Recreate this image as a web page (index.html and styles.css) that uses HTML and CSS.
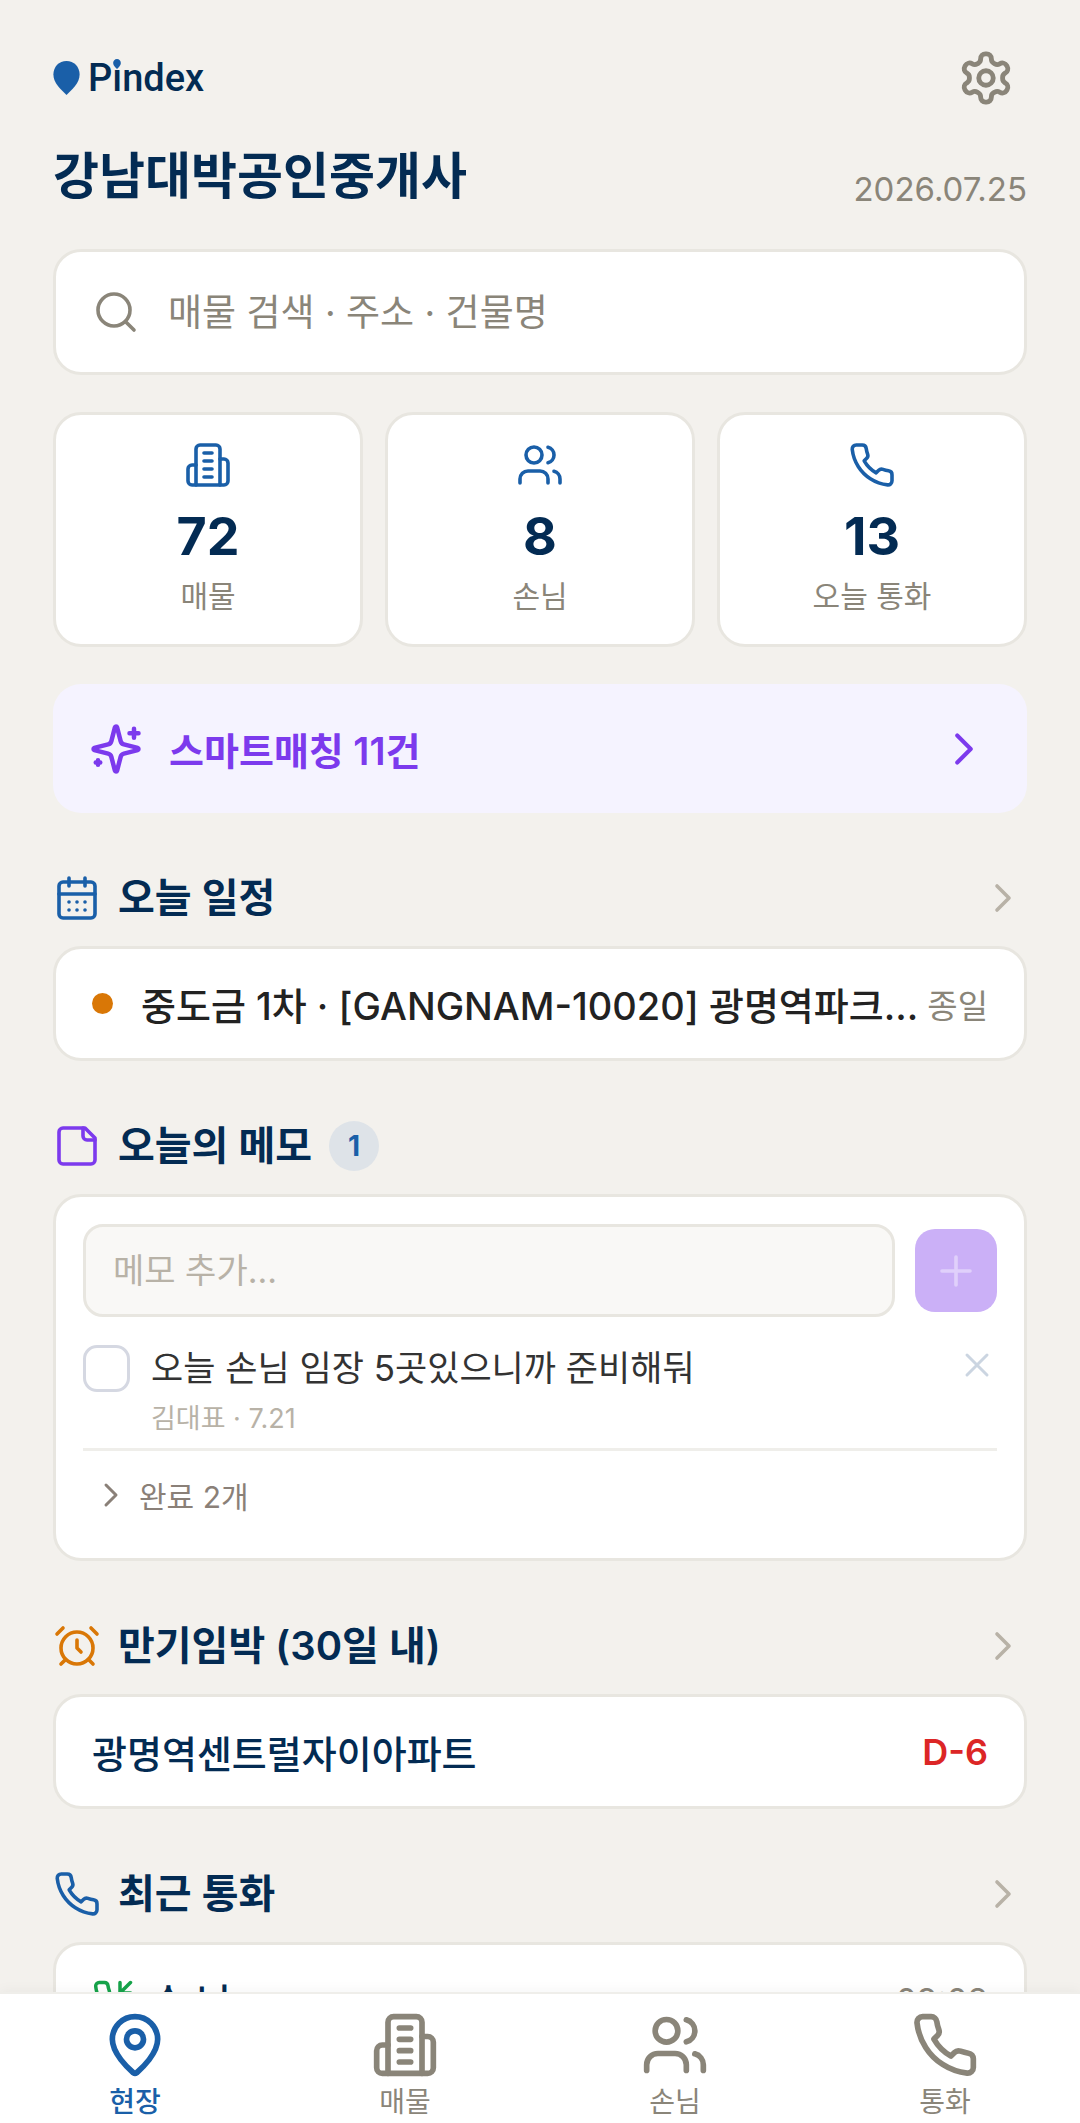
FILE: index.html
```html
<!DOCTYPE html>
<html lang="ko">
<head>
  <meta charset="UTF-8">
  <meta name="viewport" content="width=device-width, initial-scale=1.0">
  <title>Pindex</title>
  <link rel="stylesheet" href="styles.css">
</head>
<body>

  <!-- icons used more than once -->
  <svg class="sprite" aria-hidden="true">
    <symbol id="i-building" viewBox="0 0 24 24">
      <path d="M6 22V4a2 2 0 0 1 2-2h8a2 2 0 0 1 2 2v18Z"/>
      <path d="M6 12H4a2 2 0 0 0-2 2v6a2 2 0 0 0 2 2h2"/>
      <path d="M18 9h2a2 2 0 0 1 2 2v9a2 2 0 0 1-2 2h-2"/>
      <path d="M10 6h4M10 10h4M10 14h4M10 18h4"/>
    </symbol>
    <symbol id="i-users" viewBox="0 0 24 24">
      <path d="M16 21v-2a4 4 0 0 0-4-4H6a4 4 0 0 0-4 4v2"/>
      <circle cx="9" cy="7" r="4"/>
      <path d="M22 21v-2a4 4 0 0 0-3-3.87"/>
      <path d="M16 3.13a4 4 0 0 1 0 7.75"/>
    </symbol>
    <symbol id="i-phone" viewBox="0 0 24 24">
      <path d="M22 16.92v3a2 2 0 0 1-2.18 2 19.79 19.79 0 0 1-8.63-3.07 19.5 19.5 0 0 1-6-6 19.79 19.79 0 0 1-3.07-8.67A2 2 0 0 1 4.11 2h3a2 2 0 0 1 2 1.72 12.84 12.84 0 0 0 .7 2.81 2 2 0 0 1-.45 2.11L8.09 9.91a16 16 0 0 0 6 6l1.27-1.27a2 2 0 0 1 2.11-.45 12.84 12.84 0 0 0 2.81.7A2 2 0 0 1 22 16.92z"/>
    </symbol>
    <symbol id="i-chevron" viewBox="0 0 24 24">
      <path d="m9 18 6-6-6-6"/>
    </symbol>
  </svg>

  <main class="content">
    <header class="topbar">
      <a class="logo" href="#" aria-label="Pindex">
        <svg class="logo-pin" viewBox="0 0 27 35"><path d="M13.500 0C5.800 0 0 5.900 0 14c0 8.500 7.500 15.500 13.500 21C19.500 29.500 27 22.500 27 14 27 5.900 21.200 0 13.500 0z"/></svg>
        <span class="logo-text">P<span class="logo-i">ı<svg viewBox="0 0 27 35"><path d="M13.500 0C5.800 0 0 5.900 0 14c0 8.500 7.500 15.500 13.500 21C19.500 29.500 27 22.500 27 14 27 5.900 21.200 0 13.500 0z"/></svg></span>ndex</span>
      </a>
      <button class="settings-btn" type="button" aria-label="설정">
        <svg class="icon icon-58" viewBox="0 0 24 24">
          <path d="M12.22 2h-.44a2 2 0 0 0-2 2v.18a2 2 0 0 1-1 1.73l-.43.25a2 2 0 0 1-2 0l-.15-.08a2 2 0 0 0-2.73.73l-.22.38a2 2 0 0 0 .73 2.73l.15.1a2 2 0 0 1 1 1.72v.51a2 2 0 0 1-1 1.74l-.15.09a2 2 0 0 0-.73 2.73l.22.38a2 2 0 0 0 2.73.73l.15-.08a2 2 0 0 1 2 0l.43.25a2 2 0 0 1 1 1.73V20a2 2 0 0 0 2 2h.44a2 2 0 0 0 2-2v-.18a2 2 0 0 1 1-1.73l.43-.25a2 2 0 0 1 2 0l.15.08a2 2 0 0 0 2.73-.73l.22-.39a2 2 0 0 0-.73-2.73l-.15-.08a2 2 0 0 1-1-1.74v-.5a2 2 0 0 1 1-1.74l.15-.09a2 2 0 0 0 .73-2.73l-.22-.38a2 2 0 0 0-2.73-.73l-.15.08a2 2 0 0 1-2 0l-.43-.25a2 2 0 0 1-1-1.73V4a2 2 0 0 0-2-2z"/>
          <circle cx="12" cy="12" r="3"/>
        </svg>
      </button>
    </header>

    <div class="office">
      <h1>강남대박공인중개사</h1>
      <time class="date" datetime="2026-07-25">2026.07.25</time>
    </div>

    <label class="card search">
      <svg class="icon icon-48" viewBox="0 0 24 24"><circle cx="11" cy="11" r="8"/><path d="m21 21-4.300-4.300"/></svg>
      <input type="search" placeholder="매물 검색 · 주소 · 건물명" aria-label="매물 검색">
    </label>

    <div class="stats">
      <a class="card stat" href="#">
        <svg class="icon icon-48 blue"><use href="#i-building"/></svg>
        <strong>72</strong>
        <span>매물</span>
      </a>
      <a class="card stat" href="#">
        <svg class="icon icon-48 blue"><use href="#i-users"/></svg>
        <strong>8</strong>
        <span>손님</span>
      </a>
      <a class="card stat" href="#">
        <svg class="icon icon-48 blue"><use href="#i-phone"/></svg>
        <strong>13</strong>
        <span>오늘 통화</span>
      </a>
    </div>

    <a class="smart" href="#">
      <svg class="icon icon-54 bold" viewBox="0 0 24 24">
        <path d="M9.937 15.5A2 2 0 0 0 8.5 14.063l-6.135-1.582a.5.5 0 0 1 0-.962L8.5 9.936A2 2 0 0 0 9.937 8.5l1.582-6.135a.5.5 0 0 1 .963 0L14.063 8.5A2 2 0 0 0 15.5 9.937l6.135 1.581a.5.5 0 0 1 0 .964L15.5 14.063a2 2 0 0 0-1.437 1.437l-1.582 6.135a.5.5 0 0 1-.963 0z"/>
        <path d="M20 3v4M22 5h-4M4 17v2M5 18H3"/>
      </svg>
      <span>스마트매칭 11건</span>
      <svg class="icon icon-54"><use href="#i-chevron"/></svg>
    </a>

    <section class="section">
      <a class="section-head" href="#">
        <svg class="icon icon-48 blue" viewBox="0 0 24 24">
          <path d="M8 2v4M16 2v4M3 10h18"/>
          <rect x="3" y="4" width="18" height="18" rx="2"/>
          <path d="M8 14h.01M12 14h.01M16 14h.01M8 18h.01M12 18h.01M16 18h.01"/>
        </svg>
        <h2>오늘 일정</h2>
        <svg class="icon icon-48 more"><use href="#i-chevron"/></svg>
      </a>
      <div class="card row">
        <span class="dot"></span>
        <span class="event">중도금 1차 · [GANGNAM-10020] 광명역파크...</span>
        <span class="when">종일</span>
      </div>
    </section>

    <section class="section">
      <div class="section-head">
        <svg class="icon icon-48 purple" viewBox="0 0 24 24">
          <path d="M16 3H5a2 2 0 0 0-2 2v14a2 2 0 0 0 2 2h14a2 2 0 0 0 2-2V8Z"/>
          <path d="M15 3v4a2 2 0 0 0 2 2h4"/>
        </svg>
        <h2>오늘의 메모</h2>
        <span class="badge">1</span>
      </div>
      <div class="card memo-card">
        <form class="memo-form">
          <input type="text" placeholder="메모 추가..." aria-label="메모 추가">
          <button type="button" aria-label="추가" disabled>
            <svg class="icon" viewBox="0 0 24 24"><path d="M5 12h14M12 5v14"/></svg>
          </button>
        </form>
        <div class="memo-item">
          <input type="checkbox" id="memo1">
          <div class="memo-body">
            <label for="memo1">오늘 손님 임장 5곳있으니까 준비해둬</label>
            <small>김대표 · 7.21</small>
          </div>
          <button class="memo-delete" type="button" aria-label="삭제">
            <svg class="icon icon-40" viewBox="0 0 24 24"><path d="M18 6 6 18M6 6l12 12"/></svg>
          </button>
        </div>
        <button class="memo-done" type="button">
          <svg class="icon icon-40"><use href="#i-chevron"/></svg>
          완료 2개
        </button>
      </div>
    </section>

    <section class="section">
      <a class="section-head" href="#">
        <svg class="icon icon-48 orange" viewBox="0 0 24 24">
          <circle cx="12" cy="13" r="8"/>
          <path d="M12 9v4l2 2M5 3 2 6M22 6l-3-3M6.380 18.700 4 21M17.640 18.670 20 21"/>
        </svg>
        <h2>만기임박 (30일 내)</h2>
        <svg class="icon icon-48 more"><use href="#i-chevron"/></svg>
      </a>
      <a class="card row" href="#">
        <span class="name">광명역센트럴자이아파트</span>
        <span class="dday">D-6</span>
      </a>
    </section>

    <section class="section">
      <a class="section-head" href="#">
        <svg class="icon icon-48 blue"><use href="#i-phone"/></svg>
        <h2>최근 통화</h2>
        <svg class="icon icon-48 more"><use href="#i-chevron"/></svg>
      </a>
      <a class="card row call" href="#">
        <svg class="icon icon-42 green bold" viewBox="0 0 24 24">
          <path d="M16 2v6h6M22 2l-6 6"/>
          <use href="#i-phone" width="24" height="24"/>
        </svg>
        <span class="name">손 님</span>
        <span class="when">09:08</span>
      </a>
    </section>
  </main>

  <nav class="tabbar">
    <a class="active" href="#">
      <svg class="icon icon-68" viewBox="0 0 24 24">
        <path d="M20 10c0 4.993-5.539 10.193-7.399 11.799a1 1 0 0 1-1.202 0C9.539 20.193 4 14.993 4 10a8 8 0 0 1 16 0"/>
        <circle cx="12" cy="10" r="3"/>
      </svg>
      현장
    </a>
    <a href="#">
      <svg class="icon icon-68"><use href="#i-building"/></svg>
      매물
    </a>
    <a href="#">
      <svg class="icon icon-68"><use href="#i-users"/></svg>
      손님
    </a>
    <a href="#">
      <svg class="icon icon-68"><use href="#i-phone"/></svg>
      통화
    </a>
  </nav>

</body>
</html>
```
FILE: styles.css
```css
* {
  box-sizing: border-box;
}
body {
  margin: 0;
  height: 100vh;
  display: flex;
  flex-direction: column;
  background: #f3f1ed;
  color: #032b53;
  font-family: Inter, "Noto Sans CJK KR", sans-serif;
  font-size: 38px;
}
a {
  color: inherit;
  text-decoration: none;
}
button, input {
  font: inherit;
  color: inherit;
}
button {
  border: none;
  background: none;
  padding: 0;
  cursor: pointer;
}
h1, h2 {
  margin: 0;
}
input::placeholder {
  opacity: 1;
}

/* icons */
.sprite {
  display: none;
}
.icon {
  flex: none;
  fill: none;
  stroke: currentColor;
  stroke-width: 1.8;
  stroke-linecap: round;
  stroke-linejoin: round;
}
.icon.bold {
  stroke-width: 2;
}
.icon-40 { width: 40px; height: 40px; }
.icon-42 { width: 42px; height: 42px; }
.icon-48 { width: 48px; height: 48px; }
.icon-54 { width: 54px; height: 54px; }
.icon-58 { width: 58px; height: 58px; stroke-width: 2; }
.icon-68 { width: 68px; height: 68px; stroke-width: 2; }
.blue { color: #1a5fa8; }
.purple { color: #7c3aed; }
.orange { color: #d97706; }
.green { color: #16a34a; }

.content {
  flex: 1;
  min-height: 0;
  overflow-y: auto;
  scrollbar-width: none;
  padding: 37px 53px 0;
}
.card {
  background: #fff;
  border: 3px solid #e8e6e0;
  border-radius: 28px;
}

/* header */
.topbar {
  display: flex;
  align-items: center;
  justify-content: space-between;
}
.logo {
  display: flex;
  align-items: center;
  gap: 8px;
}
.logo svg {
  fill: #1a5fa8;
}
.logo-pin {
  width: 27px;
  height: 34px;
}
.logo-text {
  font-family: Roboto, sans-serif;
  font-size: 38px;
  font-weight: 500;
  line-height: 44px;
}
.logo-i {
  position: relative;
}
.logo-i svg {
  position: absolute;
  top: 3px;
  left: 1px;
  width: 8px;
  height: 10px;
}
.settings-btn {
  display: flex;
  padding: 12px;
  color: #8a8579;
}
.office {
  display: flex;
  align-items: flex-end;
  justify-content: space-between;
  margin: 22px 0 38px;
}
.office h1 {
  font-size: 50px;
  font-weight: 700;
  line-height: 70px;
}
.date {
  font-size: 33px;
  line-height: 44px;
  color: #8a8579;
}

.search {
  display: flex;
  align-items: center;
  gap: 28px;
  height: 126px;
  padding: 0 36px;
  color: #8a8579;
}
.search input {
  flex: 1;
  min-width: 0;
  padding: 0;
  border: none;
  outline: none;
  background: none;
  font-size: 37px;
}
.search input::placeholder {
  color: #8a8579;
}

/* counters */
.stats {
  display: grid;
  grid-template-columns: repeat(3, 1fr);
  gap: 22px;
  margin: 37px 0;
}
.stat {
  display: flex;
  flex-direction: column;
  align-items: center;
  padding: 26px 0;
}
.stat strong {
  margin: 16px 0 5px;
  font-size: 52px;
  line-height: 64px;
}
.stat span {
  font-size: 30px;
  line-height: 44px;
  color: #8a8579;
}

.smart {
  display: flex;
  align-items: center;
  gap: 26px;
  height: 129px;
  margin-bottom: 60px;
  padding: 0 36px;
  border-radius: 28px;
  background: #f5f3ff;
  color: #7c3aed;
  font-weight: 600;
}
.smart span {
  flex: 1;
}

/* sections */
.section {
  margin-bottom: 60px;
}
.section-head {
  display: flex;
  align-items: center;
  gap: 17px;
  height: 49px;
  margin-bottom: 24px;
}
.section-head h2 {
  font-size: 40px;
  font-weight: 600;
  line-height: 48px;
}
.more {
  margin-left: auto;
  color: #b8b2a7;
}
.badge {
  width: 50px;
  height: 50px;
  border-radius: 50%;
  background: #dee3e8;
  color: #1a5fa8;
  font-size: 28px;
  font-weight: 700;
  line-height: 50px;
  text-align: center;
}
.row {
  display: flex;
  align-items: center;
  height: 115px;
  padding: 0 36px;
}
.dot {
  flex: none;
  width: 21px;
  height: 21px;
  margin-right: 28px;
  border-radius: 50%;
  background: #d97706;
}
.event {
  flex: 1;
  min-width: 0;
  overflow: hidden;
  text-overflow: ellipsis;
  white-space: nowrap;
  color: #222;
  font-weight: 500;
}
.name {
  flex: 1;
  font-weight: 500;
}
.when {
  margin-left: 6px;
  font-size: 33px;
  color: #8a8579;
}
.dday {
  font-size: 36px;
  font-weight: 600;
  color: #dc2626;
}
.call .icon {
  margin-right: 17px;
}

/* memo */
.memo-card {
  padding: 27px 27px 33px;
  font-size: 34px;
}
.memo-form {
  display: flex;
  align-items: center;
  gap: 20px;
}
.memo-form input {
  flex: 1;
  min-width: 0;
  height: 93px;
  padding: 0 27px;
  border: 3px solid #e8e6e0;
  border-radius: 20px;
  background: #f9f8f6;
}
.memo-form input::placeholder {
  color: #b8b2a7;
}
.memo-form button {
  display: flex;
  align-items: center;
  justify-content: center;
  width: 82px;
  height: 83px;
  border-radius: 20px;
  background: #cbb0f7;
  color: #e0d0fb;
}
.memo-form .icon {
  width: 48px;
  height: 48px;
}
.memo-item {
  display: flex;
  align-items: flex-start;
  gap: 21px;
  padding: 28px 0 12px;
  border-bottom: 3px solid #efeeea;
}
.memo-item input {
  appearance: none;
  width: 47px;
  height: 47px;
  margin: 0;
  border: 3px solid #d5d8e2;
  border-radius: 14px;
  background: #fff;
}
.memo-body {
  flex: 1;
}
.memo-body label {
  display: block;
  font-size: 35px;
  line-height: 46px;
  color: #333;
}
.memo-body small {
  display: block;
  margin-top: 11px;
  font-size: 27px;
  line-height: 34px;
  color: #b8b2a7;
}
.memo-delete {
  display: flex;
  color: #cbd5e1;
}
.memo-done {
  display: flex;
  align-items: center;
  gap: 8px;
  height: 60px;
  margin-top: 14px;
  padding-left: 8px;
  font-size: 30px;
  color: #8a8078;
}

/* bottom tabs */
.tabbar {
  position: relative;
  display: grid;
  grid-template-columns: repeat(4, 1fr);
  border-top: 2px solid #efeeea;
  background: #fff;
  box-shadow: 0 -2px 12px rgba(0, 0, 0, 0.04);
}
.tabbar a {
  display: flex;
  flex-direction: column;
  align-items: center;
  gap: 5px;
  padding: 17px 0 3px;
  font-size: 28px;
  line-height: 36px;
  color: #8a8579;
}
.tabbar .active {
  color: #1a5fa8;
  font-weight: 500;
}
```
